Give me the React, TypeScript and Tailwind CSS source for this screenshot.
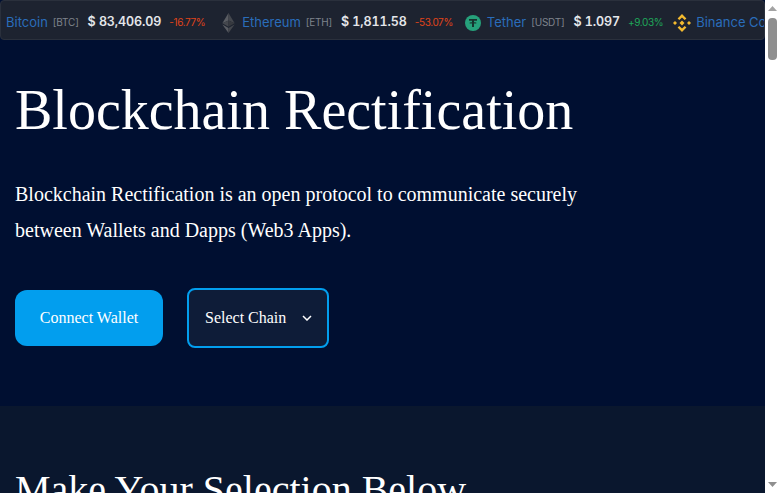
import { ReactNode } from 'react'

interface Coin {
  name: string
  symbol: string
  price: string
  change: string
  up: boolean
  icon: ReactNode
}

const coins: Coin[] = [
  {
    name: 'Bitcoin',
    symbol: 'BTC',
    price: '$ 83,406.09',
    change: '-16.77%',
    up: false,
    icon: null,
  },
  {
    name: 'Ethereum',
    symbol: 'ETH',
    price: '$ 1,811.58',
    change: '-53.07%',
    up: false,
    icon: (
      <svg width="13" height="20" viewBox="0 0 16 26" className="mr-[7px] ml-[17px]">
        <path d="M8 0 L0 13.200 L8 9.600 Z" fill="#5a5d63" />
        <path d="M8 0 L16 13.200 L8 9.600 Z" fill="#44474d" />
        <path d="M8 9.600 L0 13.200 L8 18 Z" fill="#44474d" />
        <path d="M8 9.600 L16 13.200 L8 18 Z" fill="#36393f" />
        <path d="M0 14.800 L8 26 L8 19.600 Z" fill="#5a5d63" />
        <path d="M16 14.800 L8 26 L8 19.600 Z" fill="#44474d" />
      </svg>
    ),
  },
  {
    name: 'Tether',
    symbol: 'USDT',
    price: '$ 1.097',
    change: '+9.03%',
    up: true,
    icon: (
      <svg width="16" height="16" viewBox="0 0 16 16" className="mr-[6px] ml-[12px]">
        <circle cx="8" cy="8" r="8" fill="#26a17b" />
        <path d="M4 4h8v1.700H9v1.500c1.500.1 2.600.4 2.600.7s-1.100.6-2.600.7V12H7V8.600C5.500 8.500 4.400 8.200 4.400 7.900s1.100-.6 2.600-.7V5.700H4z" fill="#16342f" />
      </svg>
    ),
  },
  {
    name: 'Binance Coin',
    symbol: 'BNB',
    price: '$ 612.40',
    change: '+1.20%',
    up: true,
    icon: (
      <svg width="18" height="18" viewBox="0 0 18 18" className="mr-[5px] ml-[10px]" fill="#f3ba2f">
        <path d="M9 0 L13.400 4.400 L11.700 6.100 L9 3.400 L6.300 6.100 L4.600 4.400 Z" />
        <path d="M9 18 L13.400 13.600 L11.700 11.900 L9 14.600 L6.300 11.900 L4.600 13.600 Z" />
        <path d="M0 9 L2 7 L4 9 L2 11 Z" />
        <path d="M18 9 L16 7 L14 9 L16 11 Z" />
        <path d="M9 6.500 L11.500 9 L9 11.500 L6.500 9 Z" />
      </svg>
    ),
  },
]

function Ticker() {
  return (
    <div className="h-[40px] bg-[#1d2330] rounded-[4px] border border-[#2a303c] flex items-center overflow-hidden whitespace-nowrap font-['Inter',sans-serif] pl-[5px] pt-[5px]">
      {coins.map(c => (
        <div key={c.name} className="flex items-center shrink-0">
          {c.icon}
          <span className="text-[13px] text-[#2a6dbb]">{c.name}</span>
          <span className="text-[10px] tracking-[-0.2px] text-[#7f838c] ml-[5px]">[{c.symbol}]</span>
          <span className="text-[12.500px] font-semibold tracking-[-0.1px] tabular-nums text-[#e4e6ea] ml-[9px]">{c.price}</span>
          <span className={`text-[10px] tracking-[-0.4px] ml-[8px] ${c.up ? 'text-[#1fa85a]' : 'text-[#e0441a]'}`}>{c.change}</span>
        </div>
      ))}
    </div>
  )
}

function Scrollbar() {
  return (
    <div className="w-[15px] shrink-0 bg-white flex flex-col items-center">
      <svg width="9" height="5" viewBox="0 0 9 5" className="mt-[6px]" fill="#a3a3a3">
        <path d="M4.500 0 L9 5 L0 5 Z" />
      </svg>
      <div className="w-[9px] h-[42px] rounded-[4px] bg-[#8f8f8f] mt-[7px]" />
      <svg width="9" height="5" viewBox="0 0 9 5" className="mt-auto mb-[6px]" fill="#8f8f8f">
        <path d="M0 0 L9 0 L4.500 5 Z" />
      </svg>
    </div>
  )
}

export default function App() {
  return (
    <div className="h-screen flex overflow-hidden bg-white">
      <div className="flex-1 min-w-0 overflow-hidden bg-[#0a172e] text-white font-['Liberation_Serif',serif]">
        <div className="bg-[#000f31]">
          <Ticker />
        </div>
        <section className="bg-[#000f31] h-[366px] px-[15px]">
          <h1 className="text-[56px] leading-[67px] pt-[37px] whitespace-nowrap">Blockchain Rectification</h1>
          <p className="text-[20px] leading-[36px] mt-[32px] w-[600px]">
            Blockchain Rectification is an open protocol to communicate securely between Wallets and Dapps (Web3 Apps).
          </p>
          <div className="flex items-center gap-[24px] mt-[40px]">
            <button className="w-[148px] h-[56px] rounded-[12px] bg-[#029eee] text-[16px]">Connect Wallet</button>
            <button className="w-[142px] h-[60px] rounded-[8px] bg-[#0e1c38] border-2 border-[#029eee] text-[16px] flex items-center pl-[16px]">
              Select Chain
              <svg width="10" height="6" viewBox="0 0 10 6" fill="none" stroke="#fff" strokeWidth="1.500" className="ml-[16px]">
                <path d="M1 1 L5 5 L9 1" />
              </svg>
            </button>
          </div>
        </section>
        <section className="px-[15px] pt-[60px]">
          <h2 className="text-[40px] leading-[48px] whitespace-nowrap">Make Your Selection Below</h2>
        </section>
      </div>
      <Scrollbar />
    </div>
  )
}
